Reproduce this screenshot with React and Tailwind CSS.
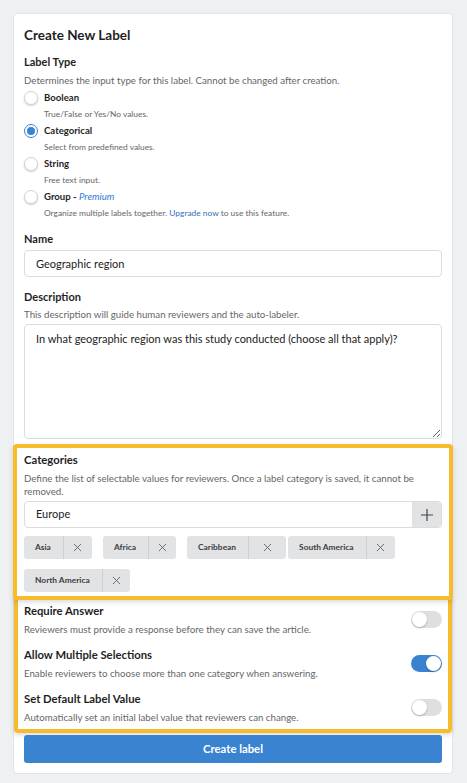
import React from 'react';

const types = [
    { key: 'boolean', label: 'Boolean', sub: 'True/False or Yes/No values.' },
    { key: 'categorical', label: 'Categorical', sub: 'Select from predefined values.', checked: true },
    { key: 'string', label: 'String', sub: 'Free text input.' },
    { key: 'group', label: 'Group', premium: true },
];

const tags = [
    { name: 'Asia', mr: 'mr-[11px]', xw: 'w-[29px]' },
    { name: 'Africa', mr: 'mr-[11px]', xw: 'w-[28px]' },
    { name: 'Caribbean', mr: 'mr-[2px]', xw: 'w-[38px]' },
    { name: 'South America', mr: 'mr-[11px]', xw: 'w-[29px]' },
    { name: 'North America', mr: 'mr-[11px]', xw: 'w-[28px]' },
];

const settings = [
    { title: 'Require Answer', sub: 'Reviewers must provide a response before they can save the article.', on: false },
    { title: 'Allow Multiple Selections', sub: 'Enable reviewers to choose more than one category when answering.', on: true },
    { title: 'Set Default Label Value', sub: 'Automatically set an initial label value that reviewers can change.', on: false },
];

const Radio = ({ checked }) => (
    checked ? (
        <span className="w-[14px] h-[14px] rounded-full border-[1.5px] border-[#3a83d0] bg-white flex items-center justify-center shrink-0">
            <span className="w-[8px] h-[8px] rounded-full bg-[#3a83d0]" />
        </span>
    ) : (
        <span className="w-[14px] h-[14px] rounded-full border border-[#d4d4d4] bg-white shadow-[0_1px_2px_rgba(0,0,0,0.18)] shrink-0" />
    )
);

const Toggle = ({ on }) => (
    <span className={on
        ? 'w-[31px] h-[17px] rounded-full bg-[#3a83d0] flex items-center justify-end px-[1px] shrink-0'
        : 'w-[31px] h-[17px] rounded-full bg-[#dedfe1] flex items-center px-[1px] shrink-0'}>
        <span className="w-[15px] h-[15px] rounded-full bg-white shadow-[0_1px_2px_rgba(0,0,0,0.25)]" />
    </span>
);

const XIcon = () => (
    <svg width="9" height="9" viewBox="0 0 10 10" fill="none" stroke="#555" strokeWidth="0.9">
        <path d="M1 1L9 9M9 1L1 9" />
    </svg>
);

export default function App() {
    return (
        <div className="min-h-[783px] bg-[#eff0f2] pt-[13px] font-['Lato','Open_Sans',sans-serif] text-[#1f1f1f]">
            <div className="mx-[13px] w-[440px] bg-white border border-[#e3e4e6] rounded-[4px] px-[10px] pt-[12px] pb-[10px]">
                <h1 className="text-[13.5px] leading-[18px] font-bold">Create New Label</h1>

                {/* Label type */}
                <h2 className="mt-[11px] text-[11px] leading-[14px] font-bold">Label Type</h2>
                <p className="mt-[5px] text-[9.7px] leading-[12px] text-[#666]">
                    Determines the input type for this label. Cannot be changed after creation.
                </p>
                <div className="mt-[5px] flex flex-col gap-[4px]">
                    {types.map(t => (
                        <div key={t.key}>
                            <div className="flex items-center gap-[6px] h-[14px]">
                                <Radio checked={t.checked} />
                                <span className="text-[9.6px] leading-[14px] font-bold">
                                    {t.label}
                                    {t.premium && <> - <span className="italic font-normal text-[#2f7dd0]">Premium</span></>}
                                </span>
                            </div>
                            <p className="mt-[3px] ml-[20px] text-[8.4px] leading-[12px] text-[#666]">
                                {t.premium
                                    ? <>Organize multiple labels together. <span className="text-[#2f6fc0]">Upgrade now</span> to use this feature.</>
                                    : t.sub}
                            </p>
                        </div>
                    ))}
                </div>

                {/* Name */}
                <h2 className="mt-[13px] text-[11px] leading-[14px] font-bold">Name</h2>
                <input
                    readOnly
                    value="Geographic region"
                    className="mt-[4px] block w-full h-[27px] border border-[#dcdcdc] rounded-[4px] px-[11px] text-[11px] text-[#222] outline-none"
                />

                {/* Description */}
                <h2 className="mt-[13px] text-[11px] leading-[14px] font-bold">Description</h2>
                <p className="mt-[4px] text-[9.7px] leading-[12px] text-[#666]">
                    This description will guide human reviewers and the auto-labeler.
                </p>
                <textarea
                    readOnly
                    value="In what geographic region was this study conducted (choose all that apply)?"
                    className="mt-[4px] block w-full h-[115px] border border-[#dcdcdc] rounded-[4px] px-[11px] pt-[6px] text-[11px] leading-[15px] text-[#222] outline-none"
                />

                {/* Categories (highlighted) */}
                <div className="relative z-10 mt-[5px] -mx-[11px] border-4 border-[#f7bc2c] rounded-[4px] px-[7px] pt-[5px] pb-[4px] bg-white shadow-[0_2px_5px_rgba(0,0,0,0.15)]">
                    <h2 className="text-[11.3px] leading-[14px] font-bold">Categories</h2>
                    <p className="mt-[5px] text-[9.7px] leading-[13px] text-[#666]">
                        Define the list of selectable values for reviewers. Once a label category is saved, it cannot be removed.
                    </p>
                    <div className="mt-[3px] flex h-[27px] border border-[#dcdcdc] rounded-[4px] overflow-hidden">
                        <input
                            readOnly
                            value="Europe"
                            className="flex-1 min-w-0 px-[11px] text-[11px] text-[#222] outline-none"
                        />
                        <span className="w-[29px] bg-[#e2e3e5] flex items-center justify-center">
                            <svg width="12" height="12" viewBox="0 0 12 12" stroke="#444" strokeWidth="1.2">
                                <path d="M6 0V12M0 6H12" />
                            </svg>
                        </span>
                    </div>
                    <div className="mt-[8px] flex flex-wrap gap-y-[10px]">
                        {tags.map(t => (
                            <div key={t.name} className={`flex h-[23px] rounded-[3px] bg-[#e2e3e5] ${t.mr}`}>
                                <span className="pl-[11px] pr-[12px] flex items-center text-[8.4px] font-bold text-[#3d3d3d]">{t.name}</span>
                                <span className={`${t.xw} border-l border-[#cfd0d2] flex items-center justify-center`}>
                                    <XIcon />
                                </span>
                            </div>
                        ))}
                    </div>
                </div>

                {/* Settings (highlighted) */}
                <div className="-mt-[4px] -mx-[10px] border-4 border-[#f7bc2c] rounded-[4px] px-[6px] pt-[4px] pb-[6px] flex flex-col gap-[13px] shadow-[0_2px_5px_rgba(0,0,0,0.15)]">
                    {settings.map(s => (
                        <div key={s.title} className="flex items-center justify-between">
                            <div>
                                <h3 className="text-[11.3px] leading-[14px] font-bold">{s.title}</h3>
                                <p className="mt-[5px] text-[9.7px] leading-[12px] text-[#666]">{s.sub}</p>
                            </div>
                            <Toggle on={s.on} />
                        </div>
                    ))}
                </div>

                <button className="mt-[2px] block w-full h-[28px] rounded-[3px] bg-[#3a83d0] text-white text-[11.3px] font-bold">
                    Create label
                </button>
            </div>
        </div>
    );
}
